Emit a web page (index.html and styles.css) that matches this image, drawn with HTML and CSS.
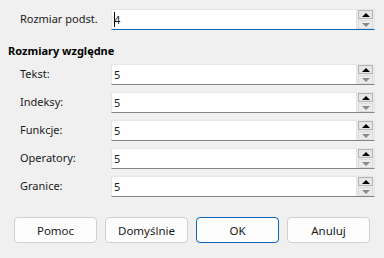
FILE: index.html
```html
<!DOCTYPE html>
<html lang="pl">
<head>
    <meta charset="UTF-8">
    <title>Rozmiary czcionek</title>
    <link rel="stylesheet" href="styles.css">
</head>
<body>
    <div class="dialog">
        <div class="row">
            <label>Rozmiar podst.</label>
            <div class="field focused">
                <span class="value"><span class="caret"></span>4</span>
                <div class="spin"><span class="up"></span><span class="down"></span></div>
            </div>
        </div>

        <h2>Rozmiary względne</h2>

        <div class="row">
            <label>Tekst:</label>
            <div class="field">
                <span class="value">5</span>
                <div class="spin"><span class="up"></span><span class="down"></span></div>
            </div>
        </div>
        <div class="row">
            <label>Indeksy:</label>
            <div class="field">
                <span class="value">5</span>
                <div class="spin"><span class="up"></span><span class="down"></span></div>
            </div>
        </div>
        <div class="row">
            <label>Funkcje:</label>
            <div class="field">
                <span class="value">5</span>
                <div class="spin"><span class="up"></span><span class="down"></span></div>
            </div>
        </div>
        <div class="row">
            <label>Operatory:</label>
            <div class="field">
                <span class="value">5</span>
                <div class="spin"><span class="up"></span><span class="down"></span></div>
            </div>
        </div>
        <div class="row">
            <label>Granice:</label>
            <div class="field">
                <span class="value">5</span>
                <div class="spin"><span class="up"></span><span class="down"></span></div>
            </div>
        </div>

        <div class="buttons">
            <button>Pomoc</button>
            <button>Domyślnie</button>
            <button class="default">OK</button>
            <button>Anuluj</button>
        </div>
    </div>
</body>
</html>
```

FILE: styles.css
```css
* {
    margin: 0;
    padding: 0;
    box-sizing: border-box;
}

body {
    font-family: 'Segoe UI', 'Noto Sans', sans-serif;
    font-size: 11px;
    background-color: #f0f0f0;
    color: #1a1a1a;
}

.dialog {
    width: 384px;
    height: 258px;
    padding: 9px 9px 0 0;
}

.row {
    display: grid;
    grid-template-columns: 111px 1fr;
    height: 21px;
    margin-bottom: 7px;
}

.row label {
    padding-left: 20px;
    line-height: 20px;
}

h2 {
    font-size: 11px;
    font-weight: bold;
    padding-left: 8px;
    line-height: 18px;
    margin: 12px 0 4px;
    color: #000;
}

.field {
    display: flex;
    background: #fff;
    border: 1px solid #e6e6e6;
    border-bottom-color: #868686;
}

.field.focused {
    border-bottom: 1px solid #0a64b8;
}

.value {
    flex: 1;
    padding-left: 2px;
    line-height: 19px;
    display: flex;
    align-items: center;
}

.caret {
    width: 1px;
    height: 15px;
    background: #000;
    margin-right: -1px;
}

.spin {
    width: 18px;
    background: #ececec;
    border-left: 1px solid #e2e2e2;
    display: flex;
    flex-direction: column;
    gap: 1px;
    padding: 0 1px;
}

.spin span {
    position: relative;
    flex: 1;
    border: 1px solid #b4b4b4;
    background: #e6e6e6;
}

.spin .down {
    border-color: #dcdcdc;
    background: #ebebeb;
}

.spin span::after {
    content: "";
    position: absolute;
    left: 50%;
    top: 50%;
    transform: translate(-50%, -50%);
    border-left: 4px solid transparent;
    border-right: 4px solid transparent;
}

.spin .up::after {
    border-bottom: 4px solid #000;
}

.spin .down::after {
    border-top: 4px solid #8a8a8a;
}

.buttons {
    display: flex;
    gap: 8px;
    padding-left: 14px;
    margin-top: 20px;
}

button {
    width: 83px;
    height: 26px;
    font-family: inherit;
    font-size: 11.5px;
    color: #1a1a1a;
    background: #fdfdfd;
    border: 1px solid #d0d0d0;
    border-radius: 4px;
}

button.default {
    border-color: #0a64b8;
}
```
